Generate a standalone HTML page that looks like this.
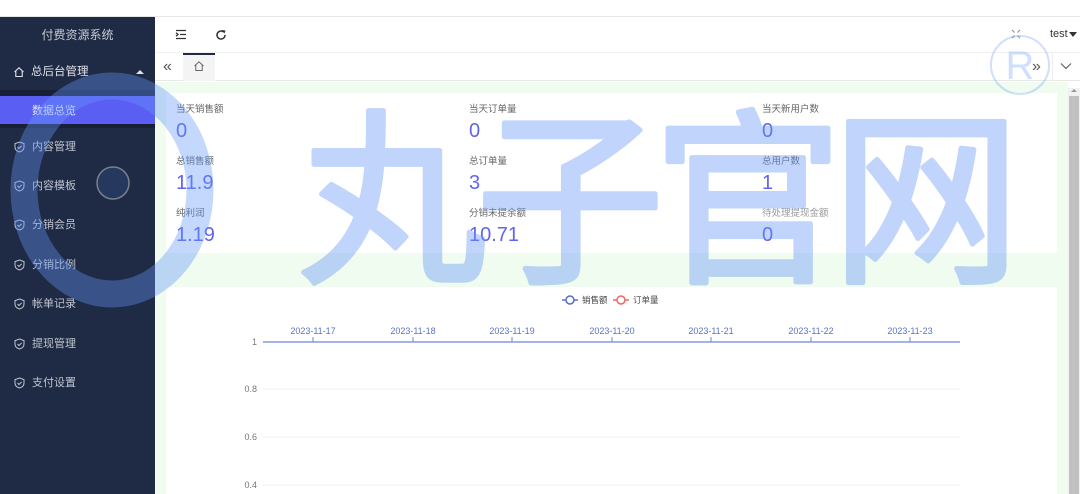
<!DOCTYPE html>
<html><head><meta charset="utf-8"><style>
*{margin:0;padding:0;box-sizing:border-box}
body{width:1080px;height:494px;overflow:hidden;position:relative;background:#fff;font-family:"Liberation Sans","Noto Sans CJK SC",sans-serif}
.abs{position:absolute}
.top{left:0;top:0;width:1080px;height:17px;border-bottom:1px solid #e6e6e6;background:#fff}
.side{left:0;top:17px;width:155px;height:477px;background:#1f2a44}
.logo{left:0;top:17px;width:155px;height:36px;line-height:36px;text-align:center;color:#c9ccd4;font-size:12px}
.mi{left:0;width:155px;height:30px;line-height:30px;font-size:11px;color:#bfc4cf;padding-left:32px}
.mi svg{position:absolute;left:14px;top:9px}
.act{background:#5b5ef2;color:#e8e8ff}
.lbl{font-size:9.5px;color:#666}
.val{font-size:20px;color:#6064f0}
</style></head><body>
<div class="abs top"></div>
<div class="abs side"></div>
<div class="abs logo">付费资源系统</div>
<div class="abs mi" style="top:57px;color:#e0e3ea;padding-left:31px;font-size:11.5px"><svg width="12" height="12" viewBox="0 0 12 12" style="left:13px"><path d="M1.5 6 L6 1.8 L10.5 6 M2.8 5 V10.5 H9.2 V5" fill="none" stroke="#dfe2ea" stroke-width="1.1"/></svg>总后台管理<span class="abs" style="left:136px;top:13px;width:0;height:0;border-left:4px solid transparent;border-right:4px solid transparent;border-bottom:4px solid #dfe2ea"></span></div>
<div class="abs" style="left:0;top:90px;width:155px;height:6px;background:#182036"></div>
<div class="abs mi act" style="top:96px">数据总览</div>
<div class="abs" style="left:0;top:124px;width:155px;height:4px;background:#182036"></div>
<div class="abs mi" style="top:132px"><svg width="11" height="12" viewBox="0 0 11 12"><path d="M5.5 1 L10 2.6 V6 C10 8.5 8 10.3 5.5 11 C3 10.3 1 8.5 1 6 V2.6 Z M3.5 6 L5 7.5 L7.7 4.8" fill="none" stroke="#bfc4cf" stroke-width="1"/></svg>内容管理</div>
<div class="abs mi" style="top:171px"><svg width="11" height="12" viewBox="0 0 11 12"><path d="M5.5 1 L10 2.6 V6 C10 8.5 8 10.3 5.5 11 C3 10.3 1 8.5 1 6 V2.6 Z M3.5 6 L5 7.5 L7.7 4.8" fill="none" stroke="#bfc4cf" stroke-width="1"/></svg>内容模板</div>
<div class="abs mi" style="top:210px"><svg width="11" height="12" viewBox="0 0 11 12"><path d="M5.5 1 L10 2.6 V6 C10 8.5 8 10.3 5.5 11 C3 10.3 1 8.5 1 6 V2.6 Z M3.5 6 L5 7.5 L7.7 4.8" fill="none" stroke="#bfc4cf" stroke-width="1"/></svg>分销会员</div>
<div class="abs mi" style="top:250px"><svg width="11" height="12" viewBox="0 0 11 12"><path d="M5.5 1 L10 2.6 V6 C10 8.5 8 10.3 5.5 11 C3 10.3 1 8.5 1 6 V2.6 Z M3.5 6 L5 7.5 L7.7 4.8" fill="none" stroke="#bfc4cf" stroke-width="1"/></svg>分销比例</div>
<div class="abs mi" style="top:289px"><svg width="11" height="12" viewBox="0 0 11 12"><path d="M5.5 1 L10 2.6 V6 C10 8.5 8 10.3 5.5 11 C3 10.3 1 8.5 1 6 V2.6 Z M3.5 6 L5 7.5 L7.7 4.8" fill="none" stroke="#bfc4cf" stroke-width="1"/></svg>帐单记录</div>
<div class="abs mi" style="top:329px"><svg width="11" height="12" viewBox="0 0 11 12"><path d="M5.5 1 L10 2.6 V6 C10 8.5 8 10.3 5.5 11 C3 10.3 1 8.5 1 6 V2.6 Z M3.5 6 L5 7.5 L7.7 4.8" fill="none" stroke="#bfc4cf" stroke-width="1"/></svg>提现管理</div>
<div class="abs mi" style="top:368px"><svg width="11" height="12" viewBox="0 0 11 12"><path d="M5.5 1 L10 2.6 V6 C10 8.5 8 10.3 5.5 11 C3 10.3 1 8.5 1 6 V2.6 Z M3.5 6 L5 7.5 L7.7 4.8" fill="none" stroke="#bfc4cf" stroke-width="1"/></svg>支付设置</div>

<svg class="abs" style="left:175px;top:29px" width="12" height="11" viewBox="0 0 12 11"><path d="M1 1.5H11 M5 5.5H11 M1 9.5H11 M1 3.8 L3 5.5 L1 7.2" fill="none" stroke="#333" stroke-width="1.3"/></svg>
<svg class="abs" style="left:215px;top:29px" width="12" height="12" viewBox="0 0 12 12"><path d="M10 6 A4 4 0 1 1 8.6 3" fill="none" stroke="#333" stroke-width="1.5"/><path d="M7 1 L10.5 1.5 L9.5 4.5Z" fill="#333"/></svg>
<svg class="abs" style="left:1011px;top:29px" width="10" height="10" viewBox="0 0 10 10"><path d="M1 1L3.5 3.5M9 1L6.5 3.5M1 9L3.5 6.5M9 9L6.5 6.5" stroke="#888" stroke-width="1"/></svg>
<div class="abs" style="left:1050px;top:28px;font-size:11px;color:#333">test</div>
<div class="abs" style="left:1069px;top:32px;border-left:4px solid transparent;border-right:4px solid transparent;border-top:5px solid #333"></div>
<div class="abs" style="left:155px;top:52px;width:925px;height:1px;background:#f0f0f0"></div>
<div class="abs" style="left:155px;top:53px;width:925px;height:28px;background:#fff;border-bottom:1px solid #e8e8e8"></div>
<div class="abs" style="left:163px;top:58px;font-size:16px;color:#555">«</div>
<div class="abs" style="left:183px;top:53px;width:32px;height:28px;background:#f4f4f4;border-top:2px solid #1f2a44"></div>
<svg class="abs" style="left:193px;top:60px" width="12" height="12" viewBox="0 0 12 12"><path d="M1.5 6 L6 1.8 L10.5 6 M2.8 5 V10.5 H9.2 V5" fill="none" stroke="#666" stroke-width="1"/></svg>
<div class="abs" style="left:1032px;top:58px;font-size:16px;color:#555">»</div>
<div class="abs" style="left:1052px;top:53px;width:1px;height:28px;background:#eee"></div>
<svg class="abs" style="left:1060px;top:62px" width="12" height="8" viewBox="0 0 12 8"><path d="M1 1.5L6 6.5L11 1.5" fill="none" stroke="#555" stroke-width="1"/></svg>
<div class="abs" style="left:155px;top:82px;width:913px;height:412px;background:#effcef"></div>
<div class="abs" style="left:1068px;top:88px;width:12px;height:406px;background:#f1f1f1"></div>
<div class="abs" style="left:1069px;top:96px;width:10px;height:398px;background:#c1c1c1"></div>
<div class="abs" style="left:1071px;top:89px;border-left:3px solid transparent;border-right:3px solid transparent;border-bottom:3px solid #999"></div>
<div class="abs" style="left:166px;top:93px;width:891px;height:160px;background:#fff"></div>
<div class="abs" style="left:166px;top:287px;width:891px;height:207px;background:#fff"></div>

<div class="abs lbl" style="left:176px;top:101px">当天销售额</div><div class="abs val" style="left:176px;top:120px">0</div>
<div class="abs lbl" style="left:176px;top:153px">总销售额</div><div class="abs val" style="left:176px;top:172px">11.9</div>
<div class="abs lbl" style="left:176px;top:205px">纯利润</div><div class="abs val" style="left:176px;top:224px">1.19</div>
<div class="abs lbl" style="left:469px;top:101px">当天订单量</div><div class="abs val" style="left:469px;top:120px">0</div>
<div class="abs lbl" style="left:469px;top:153px">总订单量</div><div class="abs val" style="left:469px;top:172px">3</div>
<div class="abs lbl" style="left:469px;top:205px">分销未提余额</div><div class="abs val" style="left:469px;top:224px">10.71</div>
<div class="abs lbl" style="left:762px;top:101px">当天新用户数</div><div class="abs val" style="left:762px;top:120px">0</div>
<div class="abs lbl" style="left:762px;top:153px">总用户数</div><div class="abs val" style="left:762px;top:172px">1</div>
<div class="abs lbl" style="left:762px;top:205px;color:#999">待处理提现金额</div><div class="abs val" style="left:762px;top:224px">0</div>

<svg class="abs" style="left:0;top:0" width="1080" height="494">
<g stroke-width="1.5" fill="#fff"><line x1="562" y1="300" x2="578" y2="300" stroke="#5470c6"/><circle cx="570" cy="300" r="4" stroke="#5470c6"/>
<line x1="613" y1="300" x2="629" y2="300" stroke="#ee6666"/><circle cx="621" cy="300" r="4" stroke="#ee6666"/></g>
<text x="582" y="303" font-size="8.5" fill="#444" font-family="Liberation Sans,Noto Sans CJK SC,sans-serif">销售额</text>
<text x="633" y="303" font-size="8.5" fill="#444" font-family="Liberation Sans,Noto Sans CJK SC,sans-serif">订单量</text>
<g stroke="#eef0f5"><line x1="263" y1="389" x2="960" y2="389"/><line x1="263" y1="437" x2="960" y2="437"/><line x1="263" y1="485" x2="960" y2="485"/></g>
<line x1="263" y1="342" x2="960" y2="342" stroke="#6e86d8" stroke-width="1.2"/>
<g stroke="#6e86d8"><line x1="313" y1="337" x2="313" y2="342"/><line x1="413" y1="337" x2="413" y2="342"/><line x1="512" y1="337" x2="512" y2="342"/><line x1="612" y1="337" x2="612" y2="342"/><line x1="711" y1="337" x2="711" y2="342"/><line x1="811" y1="337" x2="811" y2="342"/><line x1="910" y1="337" x2="910" y2="342"/></g>
<g font-size="9" fill="#5a73c8" text-anchor="middle" font-family="Liberation Sans,sans-serif">
<text x="313" y="334">2023-11-17</text><text x="413" y="334">2023-11-18</text><text x="512" y="334">2023-11-19</text><text x="612" y="334">2023-11-20</text><text x="711" y="334">2023-11-21</text><text x="811" y="334">2023-11-22</text><text x="910" y="334">2023-11-23</text></g>
<g font-size="9" fill="#777" text-anchor="end" font-family="Liberation Sans,sans-serif">
<text x="257" y="345">1</text><text x="257" y="392">0.8</text><text x="257" y="440">0.6</text><text x="257" y="488">0.4</text></g>
<ellipse cx="112" cy="190" rx="88" ry="104" fill="none" stroke="rgba(100,150,250,0.38)" stroke-width="27"/>
<circle cx="113" cy="183" r="16" fill="rgba(60,90,160,0.3)" stroke="#7a7f8c" stroke-width="1.5"/>
<circle cx="1020" cy="65" r="29" fill="none" stroke="rgba(100,150,250,0.3)" stroke-width="2"/>
<text x="1020" y="79" font-size="40" fill="rgba(100,150,250,0.3)" text-anchor="middle" font-family="Liberation Sans,sans-serif">R</text>
<g opacity="0.4"><text x="298" y="268" font-size="188" fill="#6496fa" stroke="#6496fa" stroke-width="5" stroke-linejoin="round" letter-spacing="-10" font-family="Noto Sans CJK SC,sans-serif">丸子官网</text></g>
</svg>
</body></html>
